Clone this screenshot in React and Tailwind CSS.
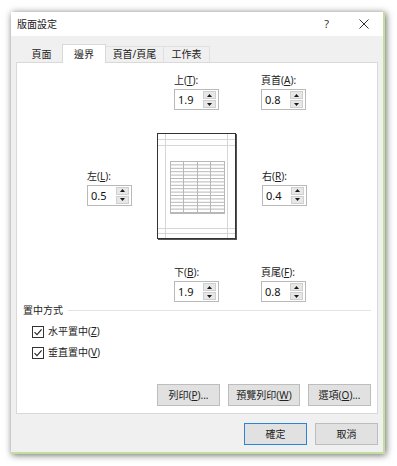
import React from 'react';

const font = "font-['Noto_Sans','Noto_Sans_CJK_TC',sans-serif]";

function Spin({ value }) {
  return (
    <div className="flex h-[21px] w-[45px] items-center justify-between border border-[#b9b9b9] bg-white pl-[3px] pr-[2px]">
      <span className="text-[11px] leading-none text-[#111]">{value}</span>
      <div className="flex flex-col gap-px">
        <div className="flex h-[8px] w-[13px] items-center justify-center border border-[#cfcfcf] bg-[#e7e7e7]">
          <svg width="5" height="3" viewBox="0 0 5 3"><path d="M2.5 0L5 3H0Z" fill="#1a1a1a" /></svg>
        </div>
        <div className="flex h-[8px] w-[13px] items-center justify-center border border-[#cfcfcf] bg-[#e7e7e7]">
          <svg width="5" height="3" viewBox="0 0 5 3"><path d="M0 0H5L2.5 3Z" fill="#1a1a1a" /></svg>
        </div>
      </div>
    </div>
  );
}

function Field({ label, hot, value }) {
  return (
    <div className="flex w-[45px] flex-col">
      <div className="h-[16px] whitespace-nowrap text-[10px] leading-[16px] text-[#222]">
        {label}(<u>{hot}</u>):
      </div>
      <div className="mt-px">
        <Spin value={value} />
      </div>
    </div>
  );
}

function Btn({ children, primary }) {
  return (
    <div
      className={
        'flex h-[22px] items-center justify-center border bg-[#e1e1e1] text-[10px] text-[#222] ' +
        (primary ? 'border-[#2c84d8]' : 'border-[#bdbdbd]')
      }
    >
      {children}
    </div>
  );
}

function Check({ children }) {
  return (
    <div className="flex h-[21px] items-center gap-[4px]">
      <div className="flex h-[12px] w-[12px] items-center justify-center border border-[#333] bg-white">
        <svg width="10" height="10" viewBox="0 0 10 10">
          <path d="M1.5 5.2L4 7.6L8.6 2.4" fill="none" stroke="#222" strokeWidth="1.1" />
        </svg>
      </div>
      <span className="text-[10px] text-[#222]">{children}</span>
    </div>
  );
}

function Preview() {
  const rows = [];
  for (let i = 0; i <= 15; i++) rows.push(28 + i * 3.4);
  return (
    <svg width="80" height="107" viewBox="0 0 80 107">
      <rect x="0.5" y="0.5" width="78" height="105" fill="#fff" stroke="#333" />
      <line x1="79.5" y1="1" x2="79.5" y2="107" stroke="#555" />
      <line x1="1" y1="106.5" x2="80" y2="106.5" stroke="#555" />
      <line x1="8.5" y1="1" x2="8.5" y2="105" stroke="#d6d6d6" />
      <line x1="70.5" y1="1" x2="70.5" y2="105" stroke="#d6d6d6" />
      <line x1="1" y1="6.5" x2="78" y2="6.5" stroke="#d6d6d6" />
      <line x1="1" y1="12.5" x2="78" y2="12.5" stroke="#d6d6d6" />
      <line x1="1" y1="95.5" x2="78" y2="95.5" stroke="#d6d6d6" />
      <line x1="1" y1="100.5" x2="78" y2="100.5" stroke="#d6d6d6" />
      <rect x="13.5" y="28.5" width="54" height="52" fill="none" stroke="#b8b8b8" />
      {rows.map((y, i) => (
        <line key={i} x1="13.5" y1={y + 0.5} x2="67.5" y2={y + 0.5} stroke="#b8b8b8" />
      ))}
      {[26.5, 40.5, 53.5].map((x) => (
        <line key={x} x1={x} y1="28.5" x2={x} y2="80.5" stroke="#b8b8b8" />
      ))}
    </svg>
  );
}

export default function App() {
  return (
    <div className={'min-h-screen bg-white pl-[11px] pt-[12px] ' + font}>
      <div className="flex h-[442px] w-[374px] flex-col border-b-2 border-r-2 border-[#c3dd9c] bg-[#f0f0f0] shadow-[1px_1px_7px_rgba(0,0,0,0.6)]">
        {/* title bar */}
        <div className="flex h-[24px] items-center bg-white pl-[6px] pr-[14px]">
          <span className="text-[10px] text-[#222]">版面設定</span>
          <span className="ml-auto mr-[30px] text-[11px] text-[#333]">?</span>
          <svg width="10" height="10" viewBox="0 0 10 10">
            <path d="M0.5 0.5L9.5 9.5M9.5 0.5L0.5 9.5" stroke="#333" strokeWidth="1" />
          </svg>
        </div>

        {/* tabs */}
        <div className="mt-[8px] flex h-[18px] items-end pl-[10px]">
          <div className="flex h-[16px] w-[41px] items-center justify-center text-[10px] text-[#222]">頁面</div>
          <div className="relative z-10 -mb-px flex h-[19px] w-[44px] items-center justify-center border border-b-0 border-[#d9d9d9] bg-white text-[10px] text-[#222]">
            邊界
          </div>
          <div className="flex h-[16px] w-[58px] items-center justify-center border-r border-t border-[#e0e0e0] text-[10px] text-[#222]">頁首/頁尾</div>
          <div className="flex h-[16px] w-[46px] items-center justify-center border-r border-t border-[#e0e0e0] text-[10px] text-[#222]">工作表</div>
        </div>

        {/* panel */}
        <div className="mx-[5px] flex h-[352px] flex-col border border-[#d9d9d9] bg-white">
          <div className="flex gap-[42px] pl-[157px] pt-[9px]">
            <Field label="上" hot="T" value="1.9" />
            <Field label="頁首" hot="A" value="0.8" />
          </div>

          <div className="mt-[23px] flex items-center pl-[70px]">
            <Field label="左" hot="L" value="0.5" />
            <div className="ml-[25px]">
              <Preview />
            </div>
            <div className="ml-[25px]">
              <Field label="右" hot="R" value="0.4" />
            </div>
          </div>

          <div className="mt-[24px] flex gap-[42px] pl-[157px]">
            <Field label="下" hot="B" value="1.9" />
            <Field label="頁尾" hot="F" value="0.8" />
          </div>

          <div className="flex h-[16px] items-center pl-[6px] pr-[6px]">
            <span className="text-[10px] text-[#222]">置中方式</span>
            <div className="ml-[5px] h-px flex-1 bg-[#e3e3e3]" />
          </div>

          <div className="mt-[3px] flex flex-col pl-[15px]">
            <Check>
              水平置中(<u>Z</u>)
            </Check>
            <Check>
              垂直置中(<u>V</u>)
            </Check>
          </div>

          <div className="mb-[7px] mt-auto flex justify-end gap-[8px] pr-[6px]">
            <div className="w-[63px]">
              <Btn>
                列印(<u>P</u>)...
              </Btn>
            </div>
            <div className="w-[72px]">
              <Btn>
                預覽列印(<u>W</u>)
              </Btn>
            </div>
            <div className="w-[63px]">
              <Btn>
                選項(<u>O</u>)...
              </Btn>
            </div>
          </div>
        </div>

        {/* footer */}
        <div className="flex justify-end gap-[8px] pr-[5px] pt-[9px]">
          <div className="w-[63px]">
            <Btn primary>確定</Btn>
          </div>
          <div className="w-[63px]">
            <Btn>取消</Btn>
          </div>
        </div>
      </div>
    </div>
  );
}
